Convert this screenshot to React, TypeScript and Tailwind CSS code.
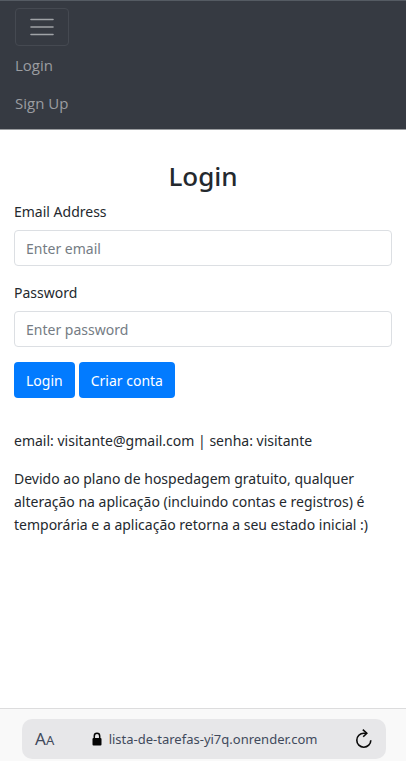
import React from "react";

type FieldProps = { id: string; label: string; type: string; placeholder: string };

function Field({ id, label, type, placeholder }: FieldProps) {
  return (
    <div className="mb-[15px]">
      <label htmlFor={id} className="mb-[7px] block">
        {label}
      </label>
      <input
        id={id}
        type={type}
        placeholder={placeholder}
        className="block h-9 w-full rounded border border-[#dcdfe3] bg-white px-[11px] text-[#495057] placeholder:text-[#757c84]"
      />
    </div>
  );
}

function NavBar() {
  return (
    <nav className="border-t border-b border-t-[#555b63] border-b-[#9b9da0] bg-[#363a42] px-[15px] pt-[7px] pb-[7px]">
      <button
        type="button"
        aria-label="Toggle navigation"
        className="flex h-[38px] w-[54px] items-center justify-center rounded border border-[#454951]"
      >
        <svg width="24" height="18" viewBox="0 0 24 18" fill="none" stroke="#a0a3a7" strokeWidth="1.6" strokeLinecap="round">
          <path d="M1 1.5H23M1 9H23M1 16.5H23" />
        </svg>
      </button>
      <a href="#login" className="block font-['Open_Sans',sans-serif] text-[15px] leading-[38px] text-[#9b9da1]">
        Login
      </a>
      <a href="#signup" className="block font-['Open_Sans',sans-serif] text-[15px] leading-[38px] text-[#9b9da1]">
        Sign Up
      </a>
    </nav>
  );
}

function AddressBar() {
  return (
    <footer className="mt-auto border-t border-[#dcdcdd] bg-[#f9f9f9] pt-[10px] pr-5 pb-0.5 pl-[22px]">
      <div className="flex h-10 items-center rounded-[10px] bg-[#e7e7e9] px-[13px] text-[#414a5c]">
        <button type="button" aria-label="Text size" className="flex items-baseline">
          <span className="text-[17px]">A</span>
          <span className="text-[13px]">A</span>
        </button>
        <div className="flex flex-1 items-center justify-center gap-[7px]">
          <svg width="10" height="14" viewBox="0 0 10 14">
            <rect x="0.5" y="6" width="9" height="7.5" rx="1" fill="#050505" />
            <path d="M2.3 6.5V4a2.7 2.7 0 0 1 5.4 0v2.5" fill="none" stroke="#050505" strokeWidth="1.5" />
          </svg>
          <span className="text-[13px]">lista-de-tarefas-yi7q.onrender.com</span>
        </div>
        <button type="button" aria-label="Reload">
          <svg width="18" height="20" viewBox="0 0 18 20" fill="none" stroke="#0a0a0a" strokeWidth="1.6">
            <path d="M11.8 4.2H8.8A7 7 0 1 0 15.8 11.2" />
            <path d="M7.8 0.6L11.8 4.2L8.2 7.8" />
          </svg>
        </button>
      </div>
    </footer>
  );
}

export default function App() {
  return (
    <div className="flex min-h-screen flex-col bg-white font-['Noto_Sans',sans-serif] text-[14px] leading-[23px] text-[#24292e]">
      <NavBar />
      <main className="px-[14px] pt-[30px] pb-8">
        <h2 className="mb-2 text-center text-[26px] leading-8 font-medium">Login</h2>
        <form onSubmit={(e) => e.preventDefault()}>
          <Field id="email" label="Email Address" type="email" placeholder="Enter email" />
          <Field id="password" label="Password" type="password" placeholder="Enter password" />
          <div className="flex gap-1">
            <button type="submit" className="h-9 rounded bg-[#027bff] px-3 text-white">
              Login
            </button>
            <button type="button" className="h-9 rounded bg-[#027bff] px-3 text-white">
              Criar conta
            </button>
          </div>
        </form>
        <p className="mt-[31px] mb-[15px]">email: visitante@gmail.com | senha: visitante</p>
        <p>
          Devido ao plano de hospedagem gratuito, qualquer alteração na aplicação (incluindo contas e registros) é
          temporária e a aplicação retorna a seu estado inicial :)
        </p>
      </main>
      <AddressBar />
    </div>
  );
}
